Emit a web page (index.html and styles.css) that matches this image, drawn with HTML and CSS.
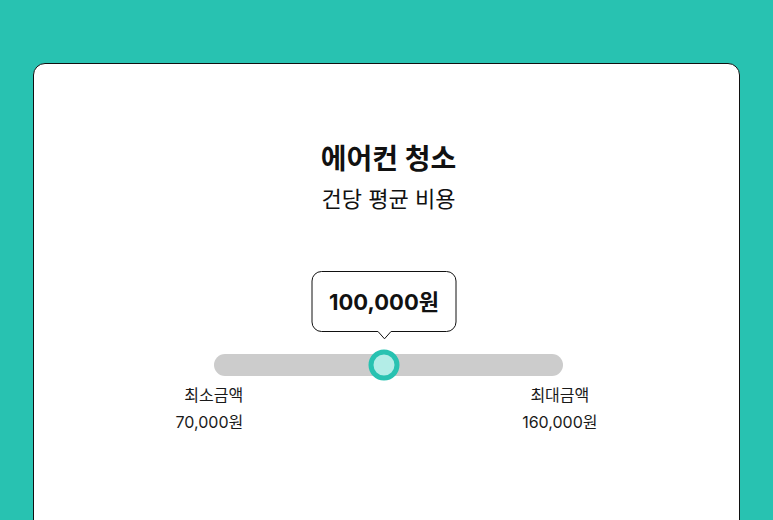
FILE: index.html
```html
<!DOCTYPE html>
<html lang="ko">
<head>
    <meta charset="UTF-8">
    <meta name="viewport" content="width=device-width, initial-scale=1.0">
    <title>에어컨 청소 - 건당 평균 비용</title>
    <link rel="stylesheet" href="styles.css">
</head>
<body>
    <div class="card">
        <h2 class="title">에어컨 청소</h2>
        <p class="subtitle">건당 평균 비용</p>

        <div class="slider">
            <div class="track">
                <div class="bubble" style="left: 170px;">
                    100,000원
                    <svg class="bubble-tail" width="14" height="9" viewBox="0 0 14 9">
                        <path d="M0 0 L7 8 L14 0 Z" fill="#fff"/>
                        <path d="M0.5 0.5 L7 7.8 L13.5 0.5" fill="none" stroke="#111" stroke-width="1"/>
                    </svg>
                </div>
                <div class="thumb" style="left: 170px;"></div>
            </div>
        </div>

        <div class="range">
            <div class="range-min">
                <div>최소금액</div>
                <div>70,000원</div>
            </div>
            <div class="range-max">
                <div>최대금액</div>
                <div>160,000원</div>
            </div>
        </div>
    </div>
</body>
</html>
```

FILE: styles.css
```css
body {
    margin: 0;
    height: 520px;
    overflow: hidden;
    background-color: #28c2b1;
    font-family: Inter, "Noto Sans CJK KR", sans-serif;
    color: #111;
}
.card {
    margin: 63px 33px 0;
    height: 470px;
    padding: 77px 0 0 4px;
    background: #fff;
    border: 1px solid #111;
    border-radius: 12px;
    display: flex;
    flex-direction: column;
    align-items: center;
}
.title {
    margin: 0;
    font-size: 28px;
    line-height: 36px;
    font-weight: 700;
}
.subtitle {
    margin: 7px 0 0;
    font-size: 22px;
    line-height: 30px;
}
.slider {
    width: 349px;
    margin-top: 140px;
}
.track {
    position: relative;
    height: 22px;
    background: #cccccc;
    border-radius: 11px;
}
.bubble {
    position: absolute;
    bottom: 44px;
    width: 145px;
    height: 61px;
    padding-bottom: 3px;
    box-sizing: border-box;
    transform: translateX(-50%);
    border: 1px solid #111;
    border-radius: 10px;
    background: #fff;
    display: flex;
    align-items: center;
    justify-content: center;
    font-size: 22px;
    font-weight: 700;
}
.bubble-tail {
    position: absolute;
    top: 100%;
    left: 50%;
    margin-left: -7px;
    display: block;
}
.thumb {
    position: absolute;
    top: 50%;
    width: 21px;
    height: 21px;
    transform: translate(-50%, -50%);
    border: 5px solid #28c2b1;
    border-radius: 50%;
    background: #b3ede7;
}
.range {
    width: 422px;
    margin: 6px 4px 0 0;
    display: flex;
    justify-content: space-between;
    font-size: 16px;
    line-height: 27px;
    color: #1a1a1a;
}
.range-min { text-align: right; }
.range-max { text-align: center; }
```
